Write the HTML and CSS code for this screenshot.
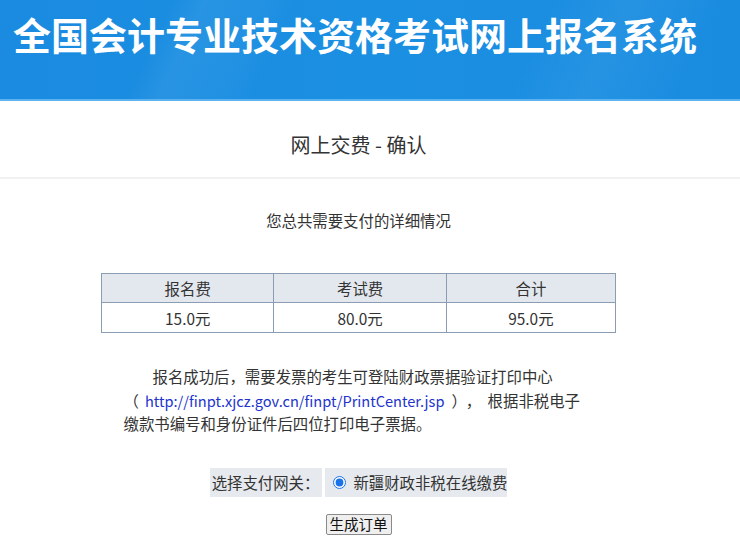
FILE: index.html
```html
<!DOCTYPE html>
<html lang="zh-CN">
<head>
<meta charset="utf-8">
<title>全国会计专业技术资格考试网上报名系统</title>
<link rel="stylesheet" href="styles.css">
</head>
<body>
<header class="banner">
  <h1 class="banner-title">全国会计专业技术资格考试网上报名系统</h1>
</header>
<div class="page-head">
  <h2 class="page-title">网上交费 - 确认</h2>
</div>
<main class="content">
  <p class="summary">您总共需要支付的详细情况</p>
  <table class="fee-table">
    <thead>
      <tr><th>报名费</th><th>考试费</th><th>合计</th></tr>
    </thead>
    <tbody>
      <tr><td>15.0元</td><td>80.0元</td><td>95.0元</td></tr>
    </tbody>
  </table>
  <p class="notice">报名成功后，需要发票的考生可登陆财政票据验证打印中心（<a class="notice-link" href="#">http://finpt.xjcz.gov.cn/finpt/PrintCenter.jsp</a><span class="notice-punct">），</span>根据非税电子缴款书编号和身份证件后四位打印电子票据。</p>
  <div class="gateway">
    <div class="gateway-label">选择支付网关：</div>
    <label class="gateway-option"><input class="gateway-radio" type="radio" name="gw" checked> 新疆财政非税在线缴费</label>
  </div>
  <div class="actions">
    <button class="submit-btn" type="button">生成订单</button>
  </div>
</main>
</body>
</html>
```
FILE: styles.css
```css
html, body {
  margin: 0;
  padding: 0;
  background: #fff;
  font-family: "Noto Sans CJK SC", "Noto Sans", sans-serif;
  color: #333;
}
.banner {
  height: 99px;
  border-bottom: 2px solid #5cb3f0;
  background:
    linear-gradient(115deg, rgba(255,255,255,0) 0%, rgba(255,255,255,0) 22%, rgba(255,255,255,0.06) 26%, rgba(255,255,255,0.03) 34%, rgba(255,255,255,0) 38%, rgba(255,255,255,0) 70%, rgba(255,255,255,0.05) 80%, rgba(255,255,255,0) 92%),
    linear-gradient(90deg, #1a8be0 0%, #1b8fe2 50%, #1a8ce0 100%);
}
.banner-title {
  margin: 0;
  padding: 13px 0 0 13px;
  font-size: 38px;
  line-height: 42px;
  font-weight: 700;
  color: #fff;
  white-space: nowrap;
}
.page-head {
  height: 76px;
  border-bottom: 2px solid #f1f1f1;
  display: flex;
  align-items: center;
  justify-content: center;
  padding-right: 23px;
}
.page-title {
  margin: 0;
  font-size: 20px;
  font-weight: 400;
  color: #333;
  line-height: 28px;
  padding-top: 12px;
}
.content {
  width: 717px;
  display: flex;
  flex-direction: column;
  align-items: center;
}
.summary {
  margin: 31px 0 0;
  font-size: 15.4px;
  line-height: 21px;
  color: #333;
}
.fee-table {
  margin-top: 42px;
  width: 515px;
  border-collapse: collapse;
  font-size: 15.4px;
  color: #333;
}
.fee-table th, .fee-table td {
  border: 1px solid #8b9db3;
  text-align: center;
  font-weight: 400;
  padding: 0;
}
.fee-table th {
  background: #e3e8ef;
  height: 28px;
}
.fee-table td {
  height: 29px;
}
.notice {
  margin: 32px 0 0;
  width: 470px;
  font-size: 15.4px;
  line-height: 23.5px;
  color: #333;
  text-indent: 29px;
  text-align: left;
}
.notice-link {
  color: #2233cc;
  font-size: 14.6px;
  text-decoration: none;
  margin: 0 7px 0 6px;
}
.notice-punct {
  letter-spacing: 6.5px;
}
.gateway {
  margin-top: 32px;
  display: flex;
  gap: 3px;
  font-size: 15.4px;
  color: #333;
}
.gateway-label, .gateway-option {
  background: #e6eaef;
  height: 29px;
  display: flex;
  align-items: center;
}
.gateway-label {
  padding: 0 3px 0 2px;
}
.gateway-option {
  padding: 0 0 0 3px;
}
.gateway-radio {
  margin: 0 7px 0 5px;
  width: 13px;
  height: 13px;
  accent-color: #1a73e8;
}
.actions {
  margin-top: 17px;
  display: flex;
}
.submit-btn {
  font-family: "Noto Sans CJK SC", sans-serif;
  font-size: 14.5px;
  line-height: 18px;
  height: 21px;
  padding: 0 3px;
  background: #efefef;
  border: 1px solid #8a8a8a;
  border-radius: 2px;
  color: #111;
}
```
